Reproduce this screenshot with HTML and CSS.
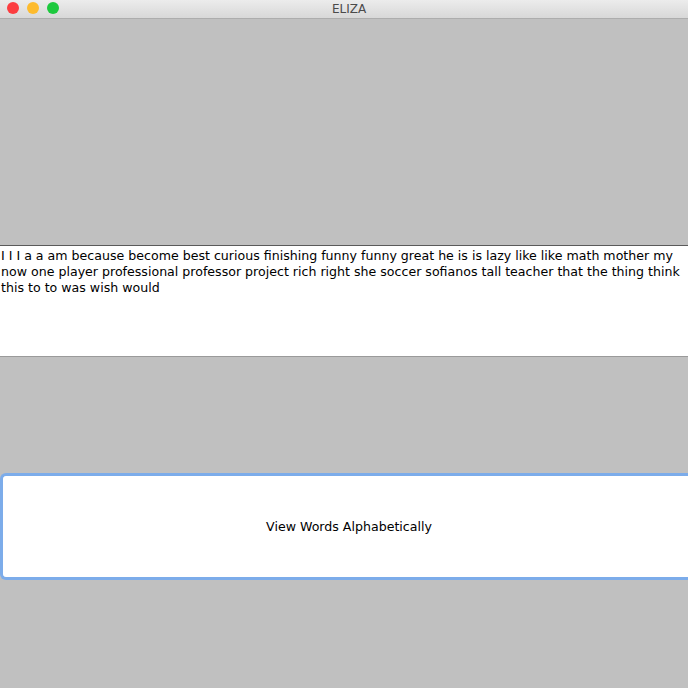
FILE: index.html
```html
<!DOCTYPE html>
<html>
<head>
<meta charset="utf-8">
<link rel="stylesheet" href="styles.css">
</head>
<body>
<div class="window">
  <div class="titlebar">
    <div class="lights">
      <span class="light red"></span>
      <span class="light yellow"></span>
      <span class="light green"></span>
    </div>
    <div class="title">ELIZA</div>
  </div>
  <div class="top-space"></div>
  <div class="textarea">I I I a a am because become best curious finishing funny funny great he is is lazy like like math mother my now one player professional professor project rich right she soccer sofianos tall teacher that the thing think this to to was wish would</div>
  <div class="mid-space"></div>
  <div class="button">View Words Alphabetically</div>
  <div class="bottom-space"></div>
</div>
</body>
</html>
```
FILE: styles.css
```css
html, body {
  margin: 0;
  padding: 0;
  background: #c0c0c0;
  overflow: hidden;
}
.window {
  width: 688px;
  height: 688px;
  display: flex;
  flex-direction: column;
  font-family: "DejaVu Sans", sans-serif;
}
.titlebar {
  height: 18px;
  border-bottom: 1px solid #adadad;
  background: linear-gradient(#ececec, #d8d8d8);
  position: relative;
  display: flex;
  align-items: center;
  justify-content: center;
  flex: none;
}
.lights {
  position: absolute;
  left: 7px;
  top: 2px;
  display: flex;
  gap: 8px;
}
.light {
  width: 12px;
  height: 12px;
  border-radius: 50%;
  display: block;
}
.red { background: #fc3d40; }
.yellow { background: #fdbb2d; }
.green { background: #1dc93e; }
.title {
  font-size: 12px;
  color: #4a4a4a;
  padding-left: 10px;
  line-height: 18px;
}
.top-space {
  height: 226px;
  flex: none;
}
.textarea {
  height: 108px;
  flex: none;
  background: #fff;
  border-top: 1px solid #5a5a5a;
  border-bottom: 1px solid #9a9a9a;
  font-size: 12.6px;
  line-height: 16px;
  color: #000;
  padding: 2px 0 0 1px;
}
.mid-space {
  height: 116px;
  flex: none;
}
.button {
  flex: none;
  height: 107px;
  width: 688px;
  box-sizing: border-box;
  background: #fff;
  border: 3px solid #7cacea;
  border-right: none;
  border-radius: 6px 0 0 6px;
  display: flex;
  align-items: center;
  justify-content: center;
  font-size: 12.6px;
  color: #000;
  padding-left: 7px;
}
.bottom-space {
  flex: 1;
}
```
